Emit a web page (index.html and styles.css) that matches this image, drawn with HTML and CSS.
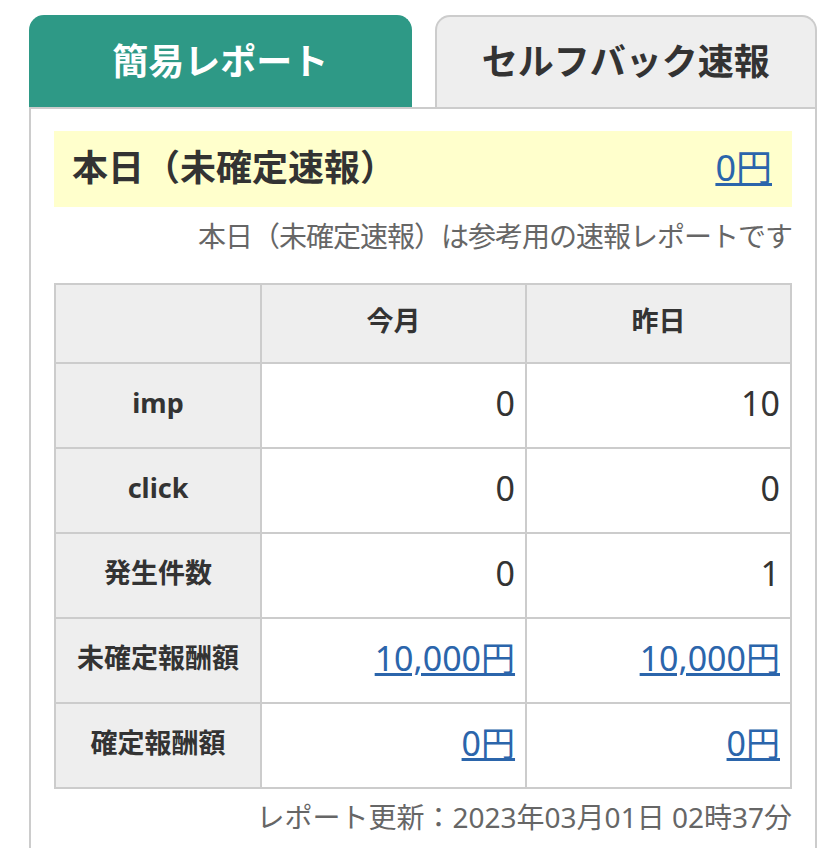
FILE: index.html
```html
<!DOCTYPE html>
<html lang="ja">
<head>
    <meta charset="UTF-8">
    <meta name="viewport" content="width=device-width, initial-scale=1.0">
    <title>簡易レポート</title>
    <link rel="stylesheet" href="styles.css">
</head>
<body>
    <div class="report">
        <div class="tabs">
            <div class="tab active">簡易レポート</div>
            <div class="tab">セルフバック速報</div>
        </div>

        <div class="panel">
            <!-- Today -->
            <div class="today">
                <span class="today-title">本日（未確定速報）</span>
                <a href="#" class="today-amount">0円</a>
            </div>
            <p class="note">本日（未確定速報）は参考用の速報レポートです</p>

            <!-- Summary table -->
            <table class="summary">
                <thead>
                    <tr>
                        <th class="col-label"></th>
                        <th>今月</th>
                        <th>昨日</th>
                    </tr>
                </thead>
                <tbody>
                    <tr>
                        <th>imp</th>
                        <td>0</td>
                        <td>10</td>
                    </tr>
                    <tr>
                        <th>click</th>
                        <td>0</td>
                        <td>0</td>
                    </tr>
                    <tr>
                        <th>発生件数</th>
                        <td>0</td>
                        <td>1</td>
                    </tr>
                    <tr>
                        <th>未確定報酬額</th>
                        <td><a href="#">10,000円</a></td>
                        <td><a href="#">10,000円</a></td>
                    </tr>
                    <tr>
                        <th>確定報酬額</th>
                        <td><a href="#">0円</a></td>
                        <td><a href="#">0円</a></td>
                    </tr>
                </tbody>
            </table>
            <p class="updated">レポート更新：2023年03月01日 02時37分</p>
        </div>
    </div>
</body>
</html>
```

FILE: styles.css
```css
body {
    margin: 0;
    font-family: "Noto Sans", "Noto Sans CJK JP", sans-serif;
    color: #333;
    background: #fff;
}

.report {
    width: 788px;
    margin: 15px 0 0 29px;
}

.tabs {
    display: flex;
    gap: 23px;
}

.tab {
    flex: 1;
    height: 92px;
    box-sizing: border-box;
    padding-bottom: 6px;
    display: flex;
    align-items: center;
    justify-content: center;
    font-size: 36px;
    font-weight: bold;
    color: #333;
    background: #eee;
    border: 2px solid #ccc;
    border-bottom: none;
    border-radius: 15px 15px 0 0;
}

.tab.active {
    color: #fff;
    background: #2e9986;
    border-color: #2e9986;
}

.panel {
    border: 2px solid #ccc;
    padding: 22px 23px;
}

.today {
    display: flex;
    justify-content: space-between;
    align-items: center;
    height: 76px;
    box-sizing: border-box;
    padding: 0 20px 8px 18px;
    background: #ffffcc;
}

.today-title {
    font-size: 36px;
    font-weight: bold;
}

a {
    color: #2b65ab;
    text-decoration: underline;
}

.today-amount {
    font-size: 36px;
}

.note {
    margin: 8px 0 0;
    text-align: right;
    font-size: 28px;
    line-height: 42px;
    letter-spacing: -1px;
    color: #666;
}

.summary {
    width: 100%;
    margin-top: 26px;
    border-collapse: collapse;
    border: 2px solid #ccc;
}

.summary th,
.summary td {
    border: 2px solid #ccc;
    padding: 0 0 5px;
    height: 78px;
    line-height: 40px;
}

.summary thead th {
    height: 72px;
    background: #eee;
    font-size: 27px;
}

.summary .col-label {
    width: 28%;
}

.summary tbody th {
    background: #eee;
    font-size: 27px;
    text-align: center;
}

.summary td {
    width: 36%;
    padding-right: 10px;
    text-align: right;
    font-size: 34px;
}

.updated {
    margin: 7px 0 0;
    text-align: right;
    font-size: 28px;
    line-height: 42px;
    color: #666;
}
```
